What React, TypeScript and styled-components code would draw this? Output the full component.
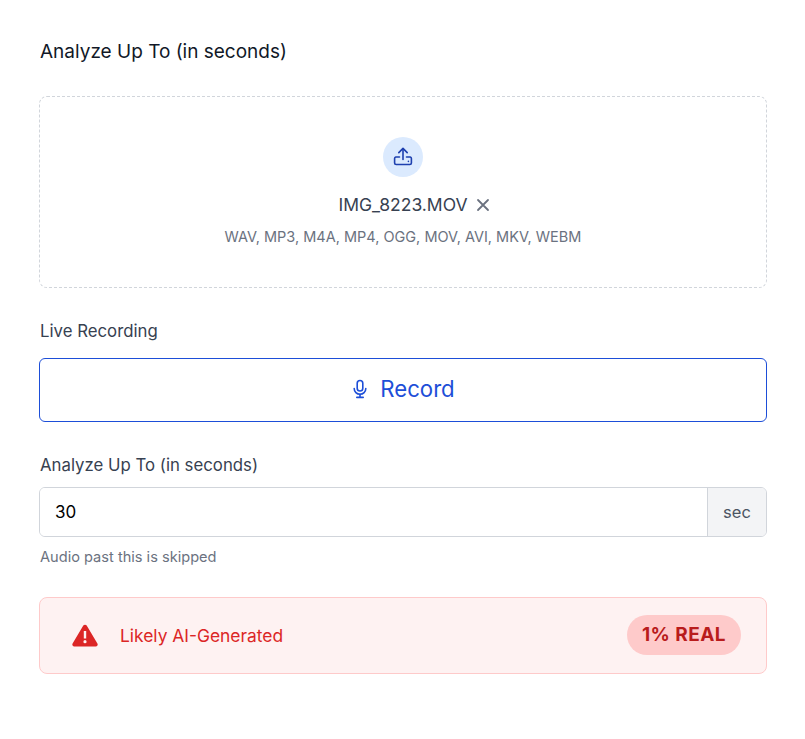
import React from "react";
import styled, { createGlobalStyle } from "styled-components";

const Global = createGlobalStyle`
  html, body { margin: 0; padding: 0; background: #fff; }
  body { font-family: "Inter", "Liberation Sans", sans-serif; color: #111827; }
`;

const Page = styled.main`
  width: 728px;
  margin-left: 39px;
  padding-top: 39px;
  display: flex;
  flex-direction: column;
`;

const Title = styled.h2`
  margin: 0 0 31px;
  padding-left: 1px;
  font-size: 19px;
  line-height: 26px;
  font-weight: 400;
  color: #111827;
`;

const Dropzone = styled.div`
  box-sizing: border-box;
  height: 192px;
  border: 1px dashed #d1d5db;
  border-radius: 8px;
  padding-top: 40px;
  display: flex;
  flex-direction: column;
  align-items: center;
`;

const IconCircle = styled.div`
  width: 40px;
  height: 40px;
  border-radius: 50%;
  background: #dbeafe;
  display: flex;
  align-items: center;
  justify-content: center;
  color: #1e40af;
`;

const FileName = styled.div`
  position: relative;
  margin-top: 16px;
  font-size: 17.5px;
  line-height: 24px;
  color: #374151;
`;

const RemoveButton = styled.span`
  position: absolute;
  left: calc(100% + 7px);
  top: 4px;
  display: flex;
`;

const Formats = styled.div`
  margin-top: 10px;
  font-size: 14.5px;
  line-height: 20px;
  color: #6b7280;
`;

const Label = styled.div<{ $top: number }>`
  margin-top: ${(p) => p.$top}px;
  padding-left: 1px;
  font-size: 16.8px;
  line-height: 24px;
  font-weight: 400;
  color: #374151;
`;

const RecordButton = styled.button`
  box-sizing: border-box;
  margin-top: 15px;
  height: 64px;
  width: 100%;
  background: #fff;
  border: 1px solid #1d4ed8;
  border-radius: 6px;
  color: #1d4ed8;
  font-family: inherit;
  font-size: 22.2px;
  line-height: 60px;
  padding: 0 0 2px;
  font-weight: 400;
  display: flex;
  align-items: center;
  justify-content: center;
  gap: 11px;
`;

const InputGroup = styled.div`
  box-sizing: border-box;
  margin-top: 10px;
  height: 50px;
  display: flex;
  border: 1px solid #d1d5db;
  border-radius: 6px;
  overflow: hidden;
`;

const NumberInput = styled.input`
  flex: 1;
  min-width: 0;
  border: 0;
  outline: 0;
  padding: 0 15px;
  font-family: inherit;
  font-size: 17px;
  color: #000;
  background: #fff;
`;

const Suffix = styled.div`
  width: 58px;
  border-left: 1px solid #d1d5db;
  background: #f3f4f6;
  color: #4b5563;
  font-size: 16.5px;
  display: flex;
  align-items: center;
  justify-content: center;
`;

const Hint = styled.div`
  margin-top: 10px;
  padding-left: 1px;
  font-size: 14.6px;
  line-height: 20px;
  color: #6b7280;
`;

const Alert = styled.div`
  box-sizing: border-box;
  margin-top: 30px;
  height: 77px;
  background: #fef2f2;
  border: 1px solid #fecaca;
  border-radius: 8px;
  padding: 0 25px 0 32px;
  display: flex;
  align-items: center;
  gap: 22px;
`;

const AlertText = styled.span`
  flex: 1;
  font-size: 17.4px;
  font-weight: 400;
  color: #dc2626;
`;

const Badge = styled.span`
  height: 40px;
  margin-top: -2px;
  padding: 0 15px;
  border-radius: 20px;
  background: #fecaca;
  color: #b91c1c;
  font-size: 19px;
  letter-spacing: 0.45px;
  font-weight: 700;
  display: flex;
  align-items: center;
`;

const UploadIcon = () => (
  <svg width="20" height="20" viewBox="0 0 20 20" fill="none" stroke="currentColor" strokeWidth="1.6" strokeLinecap="round" strokeLinejoin="round">
    <path d="M10 12.5V1.8" />
    <path d="M5.8 5.6L10 1.4L14.2 5.6" />
    <path d="M6.5 10H2.8a1.6 1.6 0 0 0-1.2 1.5v4.4A1.6 1.6 0 0 0 3.2 17.5h13.6a1.6 1.6 0 0 0 1.6-1.6v-4.4A1.6 1.6 0 0 0 17.2 10H13.5" />
    <path d="M15.4 14.4h.01" />
  </svg>
);

const CloseIcon = () => (
  <svg width="16" height="16" viewBox="0 0 16 16" fill="none" stroke="#6b7280" strokeWidth="1.8" strokeLinecap="round">
    <path d="M3 3L13 13M13 3L3 13" />
  </svg>
);

const MicIcon = () => (
  <svg width="18" height="20" viewBox="0 0 18 20" fill="none" stroke="currentColor" strokeWidth="1.6" strokeLinecap="round" strokeLinejoin="round">
    <rect x="6.2" y="1.5" width="5.6" height="10.5" rx="2.8" />
    <path d="M3.2 9.5a5.8 5.8 0 0 0 11.6 0" />
    <path d="M9 15.3v3M5.8 18.4h6.4" />
  </svg>
);

const WarningIcon = () => (
  <svg width="26" height="23" viewBox="0 0 26 22">
    <path
      fill="#dc2626"
      fillRule="evenodd"
      d="M11.3 1.1a2 2 0 0 1 3.4 0l10.7 17.9A2 2 0 0 1 23.7 22H2.3a2 2 0 0 1-1.7-3zM11.8 6.5v7.5h2.4V6.5zM13 15.6a1.6 1.6 0 1 0 0 3.2 1.6 1.6 0 0 0 0-3.2z"
    />
  </svg>
);

export default function App() {
  return (
    <>
      <Global />
      <Page>
        <Title>Analyze Up To (in seconds)</Title>
        <Dropzone>
          <IconCircle>
            <UploadIcon />
          </IconCircle>
          <FileName>
            IMG_8223.MOV
            <RemoveButton>
              <CloseIcon />
            </RemoveButton>
          </FileName>
          <Formats>WAV, MP3, M4A, MP4, OGG, MOV, AVI, MKV, WEBM</Formats>
        </Dropzone>
        <Label $top={31}>Live Recording</Label>
        <RecordButton>
          <MicIcon />
          Record
        </RecordButton>
        <Label $top={31}>Analyze Up To (in seconds)</Label>
        <InputGroup>
          <NumberInput defaultValue="30" />
          <Suffix>sec</Suffix>
        </InputGroup>
        <Hint>Audio past this is skipped</Hint>
        <Alert>
          <WarningIcon />
          <AlertText>Likely AI-Generated</AlertText>
          <Badge>1% REAL</Badge>
        </Alert>
      </Page>
    </>
  );
}
